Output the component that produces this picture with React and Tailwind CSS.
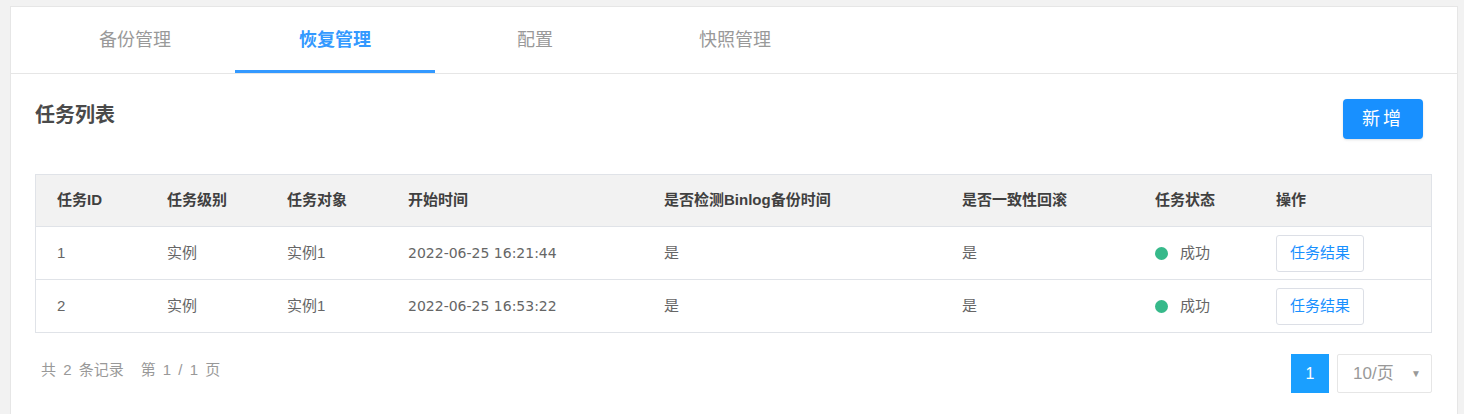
import { useState } from "react";

const tabs = ["备份管理", "恢复管理", "配置", "快照管理"];

const columns = ["任务ID", "任务级别", "任务对象", "开始时间", "是否检测Binlog备份时间", "是否一致性回滚", "任务状态", "操作"];

const tasks = [
  { id: 1, level: "实例", target: "实例1", start: "2022-06-25 16:21:44", binlog: "是", rollback: "是", status: "成功" },
  { id: 2, level: "实例", target: "实例1", start: "2022-06-25 16:53:22", binlog: "是", rollback: "是", status: "成功" },
];

const gridCols = "grid grid-cols-[110px_120px_121px_256px_298px_193px_121px_1fr]";

const TaskRow = ({ task }) => (
  <div className={`${gridCols} h-[53px] items-center border-t border-[#e0e3e8] text-[15px] text-[#666]`}>
    <div className="pl-[21px]">{task.id}</div>
    <div className="pl-[21px]">{task.level}</div>
    <div className="pl-[21px]">{task.target}</div>
    <div className="pl-[21px] text-[14px] font-['DejaVu_Sans','Noto_Sans_CJK_SC',sans-serif]">{task.start}</div>
    <div className="pl-[21px]">{task.binlog}</div>
    <div className="pl-[21px]">{task.rollback}</div>
    <div className="pl-[21px] flex items-center">
      <span className="w-[13px] h-[13px] rounded-full bg-[#36b98a] mr-[12px]"></span>
      <span>{task.status}</span>
    </div>
    <div className="pl-[21px]">
      <button className="h-[37px] w-[88px] border border-[#dcdfe6] rounded-[3px] bg-white text-[15px] text-[#1890ff]">
        任务结果
      </button>
    </div>
  </div>
);

export default function App() {
  const [active, setActive] = useState(1);

  return (
    <div className="min-h-screen bg-[#f2f2f2] pt-[6px] pl-[10px] pr-[6px] font-['Liberation_Sans','Noto_Sans_CJK_SC',sans-serif]">
      <div className="bg-white border border-[#e6e6e6] min-h-[420px]">
        {/* tabs */}
        <div className="flex px-[24px] border-b border-[#e6e6e6]">
          {tabs.map((t, i) => (
            <button
              key={t}
              onClick={() => setActive(i)}
              className={`w-[200px] h-[66px] pt-[3px] text-[18px] border-b-[3px] ${
                i === active ? "border-[#3399ff] text-[#3399ff] font-bold" : "border-transparent text-[#999]"
              }`}
            >
              {t}
            </button>
          ))}
        </div>

        <div className="px-[24px] pr-[25px]">
          {/* title row */}
          <div className="flex items-center justify-between pt-[25px] h-[65px]">
            <h2 className="text-[20px] font-bold text-[#4a4a4a] mb-[8px]">任务列表</h2>
            <button className="h-[40px] w-[80px] mr-[9px] rounded-[4px] bg-[#1890ff] text-white text-[18px] tracking-[3px] shadow-sm">
              新增
            </button>
          </div>

          {/* table */}
          <div className="mt-[35px] border border-[#e0e3e8]">
            <div className={`${gridCols} h-[51px] items-center bg-[#f2f2f2] text-[15px] font-bold text-[#404040]`}>
              {columns.map((c) => (
                <div key={c} className="pl-[21px]">{c}</div>
              ))}
            </div>
            {tasks.map((t) => (
              <TaskRow key={t.id} task={t} />
            ))}
          </div>

          {/* footer */}
          <div className="flex items-center justify-between mt-[21px]">
            <div className="pl-[6px] mb-[6px] text-[15px] text-[#999] flex gap-[17px] [word-spacing:3px]">
              <span>共 2 条记录</span>
              <span>第 1 / 1 页</span>
            </div>
            <div className="flex items-center gap-[8px]">
              <div className="w-[38px] h-[39px] bg-[#1a9fff] text-white text-[16px] flex items-center justify-center">1</div>
              <div className="w-[95px] h-[39px] border border-[#e6e6e6] rounded-[2px] flex items-center justify-between pl-[15px] pr-[10px] text-[17px] text-[#999]">
                <span>10/页</span>
                <span className="text-[10px] text-[#999]">▼</span>
              </div>
            </div>
          </div>
        </div>
      </div>
    </div>
  );
}
